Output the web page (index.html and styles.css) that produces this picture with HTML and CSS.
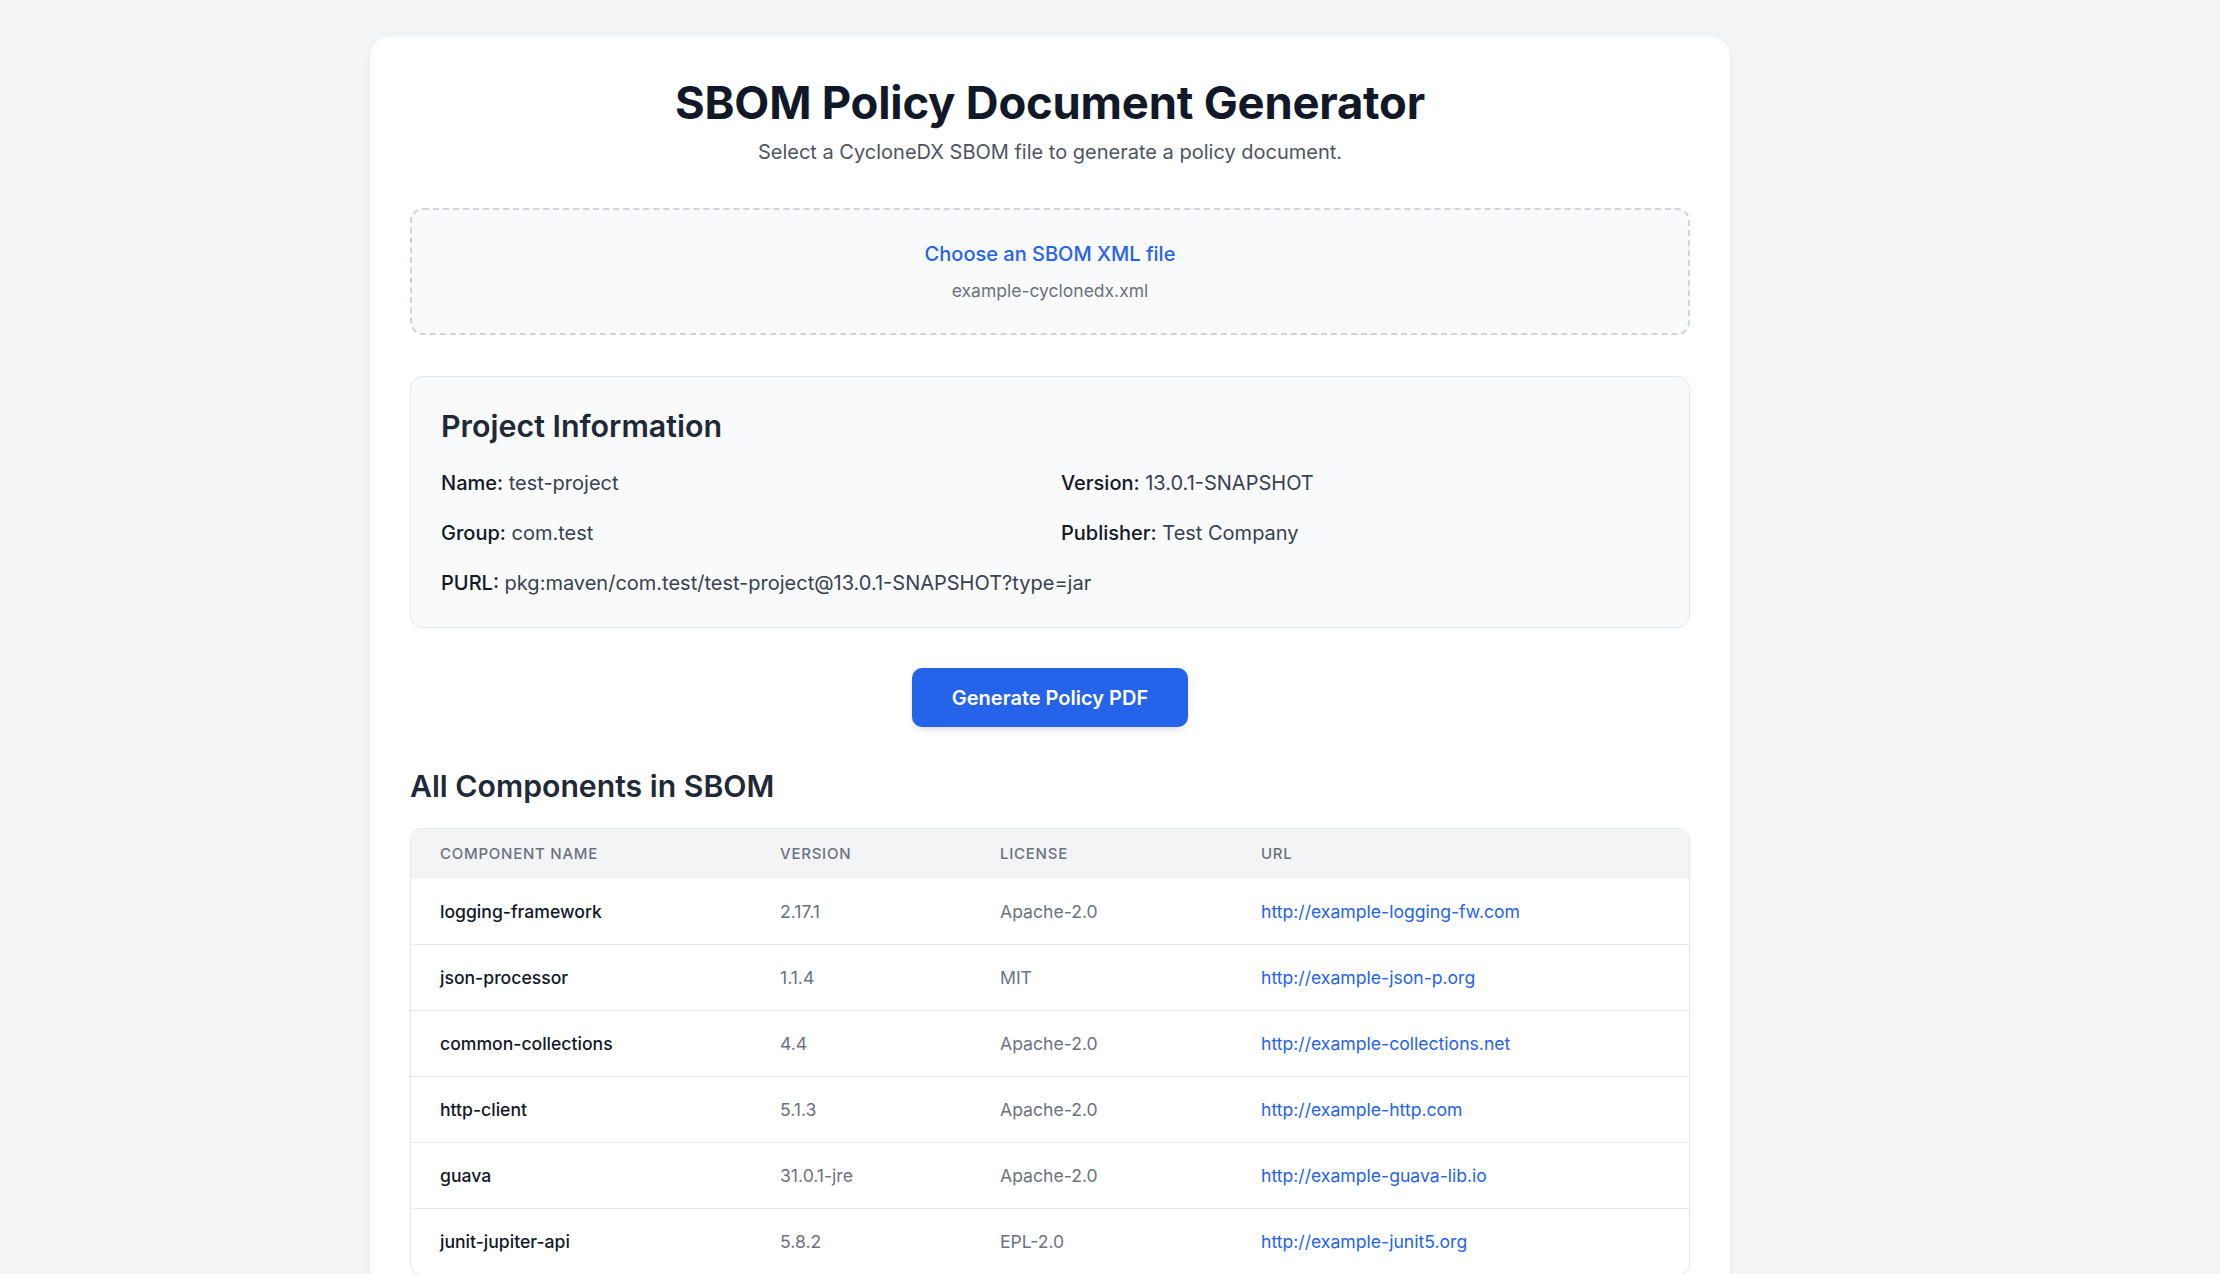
FILE: index.html
```html
<!DOCTYPE html>
<html lang="en">
<head>
<meta charset="utf-8">
<title>SBOM Policy Document Generator</title>
<link rel="stylesheet" href="styles.css">
</head>
<body>
<div class="page">
  <main class="card">
    <header class="head">
      <h1 class="title">SBOM Policy Document Generator</h1>
      <p class="subtitle">Select a CycloneDX SBOM file to generate a policy document.</p>
    </header>

    <label class="dropzone">
      <span class="choose">Choose an SBOM XML file</span>
      <span class="filename">example-cyclonedx.xml</span>
    </label>

    <section class="info">
      <h2 class="info-title">Project Information</h2>
      <div class="info-grid">
        <p class="field"><strong>Name:</strong> test-project</p>
        <p class="field"><strong>Version:</strong> 13.0.1-SNAPSHOT</p>
        <p class="field"><strong>Group:</strong> com.test</p>
        <p class="field"><strong>Publisher:</strong> Test Company</p>
        <p class="field span2"><strong>PURL:</strong> pkg:maven/com.test/test-project@13.0.1-SNAPSHOT?type=jar</p>
      </div>
    </section>

    <div class="actions">
      <button class="btn" type="button">Generate Policy PDF</button>
    </div>

    <h2 class="section-title">All Components in SBOM</h2>
    <div class="table-wrap">
      <table class="comp">
        <colgroup>
          <col class="c1"><col class="c2"><col class="c3"><col class="c4">
        </colgroup>
        <thead>
          <tr><th>Component Name</th><th>Version</th><th>License</th><th>URL</th></tr>
        </thead>
        <tbody>
          <tr><td class="name">logging-framework</td><td class="muted">2.17.1</td><td class="muted">Apache-2.0</td><td><a class="link" href="#">http://example-logging-fw.com</a></td></tr>
          <tr><td class="name">json-processor</td><td class="muted">1.1.4</td><td class="muted">MIT</td><td><a class="link" href="#">http://example-json-p.org</a></td></tr>
          <tr><td class="name">common-collections</td><td class="muted">4.4</td><td class="muted">Apache-2.0</td><td><a class="link" href="#">http://example-collections.net</a></td></tr>
          <tr><td class="name">http-client</td><td class="muted">5.1.3</td><td class="muted">Apache-2.0</td><td><a class="link" href="#">http://example-http.com</a></td></tr>
          <tr><td class="name">guava</td><td class="muted">31.0.1-jre</td><td class="muted">Apache-2.0</td><td><a class="link" href="#">http://example-guava-lib.io</a></td></tr>
          <tr><td class="name">junit-jupiter-api</td><td class="muted">5.8.2</td><td class="muted">EPL-2.0</td><td><a class="link" href="#">http://example-junit5.org</a></td></tr>
        </tbody>
      </table>
    </div>
  </main>
</div>
</body>
</html>
```

FILE: styles.css
```css
* { box-sizing: border-box; }

html, body {
  margin: 0;
  padding: 0;
  background: #f3f4f6;
  font-family: Inter, "Noto Sans", "Liberation Sans", sans-serif;
  color: #111827;
}

.page {
  padding: 37px 0 0 370px;
}

.card {
  width: 1360px;
  background: #ffffff;
  border-radius: 20px;
  box-shadow: 0 4px 6px -1px rgba(0,0,0,0.06), 0 2px 4px -2px rgba(0,0,0,0.05);
  padding: 38px 40px 40px;
}

.head { text-align: center; }

.title {
  margin: 0;
  font-size: 45.4px;
  line-height: 55px;
  font-weight: 700;
  color: #111827;
  letter-spacing: -0.2px;
}

.subtitle {
  margin: 8px 0 0;
  font-size: 20px;
  line-height: 28px;
  color: #4b5563;
}

.dropzone {
  margin-top: 42px;
  display: flex;
  flex-direction: column;
  align-items: center;
  gap: 10px;
  padding: 30px 20px 29px;
  border: 2px dashed #d1d5db;
  border-radius: 13px;
  background: #f9fafb;
  cursor: pointer;
}

.choose {
  font-size: 20px;
  line-height: 28px;
  font-weight: 500;
  color: #2563eb;
}

.filename {
  font-size: 17.5px;
  line-height: 26px;
  color: #6b7280;
}

.info {
  margin-top: 41px;
  padding: 30px 30px 29.5px;
  border: 1px solid #e5e7eb;
  border-radius: 13px;
  background: #f9fafb;
}

.info-title {
  margin: 0;
  font-size: 30.4px;
  line-height: 38px;
  font-weight: 600;
  color: #1f2937;
}

.info-grid {
  margin-top: 22.5px;
  display: grid;
  grid-template-columns: 1fr 1fr;
  column-gap: 22px;
  row-gap: 20px;
}

.field {
  margin: 0;
  font-size: 20px;
  line-height: 30px;
  color: #374151;
}

.field strong {
  font-weight: 500;
  color: #111827;
}

.span2 { grid-column: 1 / span 2; }

.actions {
  margin-top: 40px;
  display: flex;
  justify-content: center;
}

.btn {
  font-family: inherit;
  font-size: 20px;
  line-height: 28px;
  font-weight: 600;
  color: #ffffff;
  background: #2563eb;
  border: none;
  border-radius: 10px;
  padding: 16px 40px 15px;
  box-shadow: 0 4px 8px -2px rgba(0,0,0,0.12), 0 2px 4px -2px rgba(0,0,0,0.08);
  cursor: pointer;
}

.section-title {
  margin: 40px 0 0;
  font-size: 30.2px;
  line-height: 38px;
  font-weight: 600;
  color: #1f2937;
}

.table-wrap {
  margin-top: 23px;
  border: 1px solid #e5e7eb;
  border-radius: 11px;
  overflow: hidden;
}

.comp {
  width: 100%;
  border-collapse: collapse;
  table-layout: fixed;
}

.c1 { width: 340px; }
.c2 { width: 220px; }
.c3 { width: 261px; }

.comp thead th {
  background: #f3f4f6;
  text-align: left;
  font-size: 15px;
  line-height: 24px;
  font-weight: 500;
  color: #6b7280;
  text-transform: uppercase;
  letter-spacing: 0.05em;
  padding: 13px 29px;
}

.comp tbody td {
  padding: 19.5px 29px;
  font-size: 17.6px;
  line-height: 26px;
  border-top: 1px solid #e5e7eb;
  white-space: nowrap;
}

.comp tbody tr:first-child td { border-top: none; }

.name { color: #111827; font-weight: 500; }
.muted { color: #6b7280; }

.link {
  color: #2563eb;
  text-decoration: none;
}
```
